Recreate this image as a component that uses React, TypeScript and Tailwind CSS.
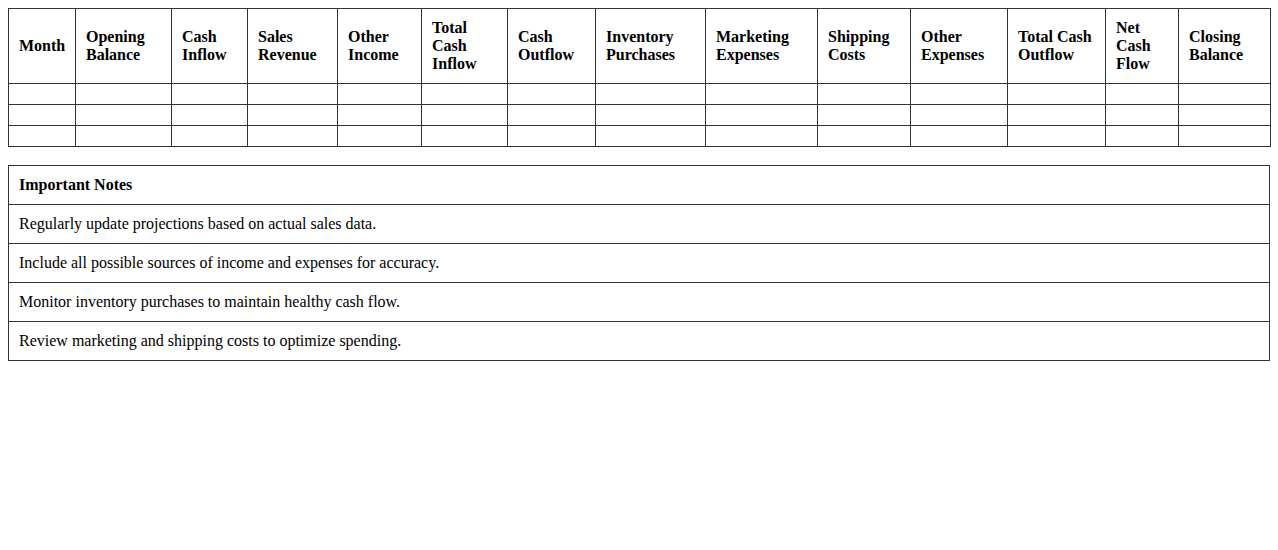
const headers = [
  ["Month"],
  ["Opening", "Balance"],
  ["Cash", "Inflow"],
  ["Sales", "Revenue"],
  ["Other", "Income"],
  ["Total", "Cash", "Inflow"],
  ["Cash", "Outflow"],
  ["Inventory", "Purchases"],
  ["Marketing", "Expenses"],
  ["Shipping", "Costs"],
  ["Other", "Expenses"],
  ["Total Cash", "Outflow"],
  ["Net", "Cash", "Flow"],
  ["Closing", "Balance"],
];

// column widths as rendered in the sheet
const widths = [67, 96, 76, 90, 84, 86, 88, 110, 112, 93, 97, 98, 73, 92];

const notes = [
  "Regularly update projections based on actual sales data.",
  "Include all possible sources of income and expenses for accuracy.",
  "Monitor inventory purchases to maintain healthy cash flow.",
  "Review marketing and shipping costs to optimize spending.",
];

const cell = "border border-[#333] p-[10px] text-left align-middle";

export default function App() {
  return (
    <div className="min-h-[550px] bg-white p-2 text-base leading-[normal] text-black [font-family:'Liberation_Serif','Times_New_Roman',serif]">
      {/* Cash flow projection */}
      <table className="mb-[18px] w-full table-fixed border-collapse">
        <colgroup>
          {widths.map((w, i) => (
            <col key={i} style={{ width: w }} />
          ))}
        </colgroup>
        <thead>
          <tr>
            {headers.map((h, i) => (
              <th key={i} className={`${cell} font-bold`}>
                {h.map((line, j) => (
                  <span key={j}>
                    {j > 0 && <br />}
                    {line}
                  </span>
                ))}
              </th>
            ))}
          </tr>
        </thead>
        <tbody>
          {[0, 1, 2].map((r) => (
            <tr key={r}>
              {headers.map((_, i) => (
                <td key={i} className={cell}></td>
              ))}
            </tr>
          ))}
        </tbody>
      </table>

      {/* Notes */}
      <table className="w-full border-collapse">
        <thead>
          <tr>
            <th className={`${cell} font-bold`}>Important Notes</th>
          </tr>
        </thead>
        <tbody>
          {notes.map((n) => (
            <tr key={n}>
              <td className={cell}>{n}</td>
            </tr>
          ))}
        </tbody>
      </table>
    </div>
  );
}
